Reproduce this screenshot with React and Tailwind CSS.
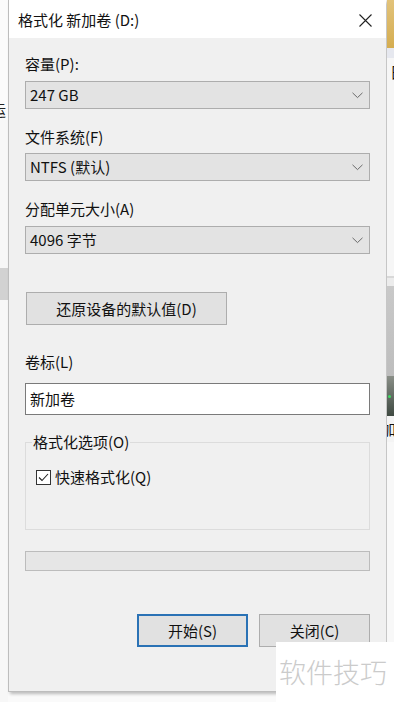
import React from "react";

const FONT = { fontFamily: '"Noto Sans CJK SC", "Noto Sans", sans-serif' };

function Chevron() {
  return (
    <svg width="11" height="7" viewBox="0 0 11 7" className="shrink-0">
      <path d="M0.5 0.8 L5.5 5.6 L10.5 0.8" fill="none" stroke="#6a6a6a" strokeWidth="1" />
    </svg>
  );
}

function Combo({ text }) {
  return (
    <div className="h-[28px] w-full border border-[#adadad] bg-[#e3e3e3] flex items-center justify-between pl-[4px] pr-[6px]">
      <span className="text-[15px] leading-[20px] text-[#111]">{text}</span>
      <Chevron />
    </div>
  );
}

function Label({ children, className = "" }) {
  return <div className={"text-[15px] leading-[20px] text-[#111] " + className}>{children}</div>;
}

export default function App() {
  return (
    <div className="relative w-[394px] h-[702px] overflow-hidden flex bg-[#fafafa]" style={FONT}>
      {/* left background strip */}
      <div className="w-[8px] h-full flex flex-col shrink-0 overflow-hidden">
        <div className="h-[100px] bg-[#fbfbfb]" />
        <div className="h-[20px] bg-[#fbfbfb] overflow-hidden flex items-center">
          <span className="text-[15px] leading-[20px] text-[#222] ml-[-9px] whitespace-nowrap">运</span>
        </div>
        <div className="h-[148px] bg-[#f7f7f7]" />
        <div className="h-[32px] bg-[#d2d2d2]" />
        <div className="flex-1 bg-[#f7f7f7]" />
      </div>

      {/* dialog */}
      <div className="w-[378px] h-[692px] shrink-0 flex flex-col bg-[#f0f0f0] border-l border-b border-[#bdbdbd] shadow-[2px_2px_3px_rgba(0,0,0,0.25)]">
        <div className="h-[38px] bg-white flex items-center justify-between pl-[9px] pr-[14px] shrink-0">
          <span className="text-[15px] leading-[20px] text-[#111] mt-[2px]">格式化 新加卷 (D:)</span>
          <svg width="13" height="13" viewBox="0 0 13 13" className="mt-[2px]">
            <path d="M0.5 0.5 L12.5 12.5 M12.5 0.5 L0.5 12.5" stroke="#222" strokeWidth="1.1" />
          </svg>
        </div>

        <div className="flex flex-col pl-[16px] pr-[16px]">
          <Label className="mt-[16px]">容量(P):</Label>
          <div className="mt-[7px]"><Combo text="247 GB" /></div>

          <Label className="mt-[18px]">文件系统(F)</Label>
          <div className="mt-[6px]"><Combo text="NTFS (默认)" /></div>

          <Label className="mt-[18px]">分配单元大小(A)</Label>
          <div className="mt-[7px]"><Combo text="4096 字节" /></div>

          <div className="mt-[38px] ml-[1px] w-[201px] h-[33px] border border-[#adadad] bg-[#e1e1e1] flex items-center justify-center">
            <span className="text-[15px] leading-[20px] text-[#111]">还原设备的默认值(D)</span>
          </div>

          <Label className="mt-[27px]">卷标(L)</Label>
          <div className="mt-[11px] h-[32px] w-full border border-[#7a7a7a] bg-white flex items-center pl-[4px]">
            <span className="text-[15px] leading-[20px] text-[#111]">新加卷</span>
          </div>

          <fieldset className="mt-[17px] h-[98px] w-full border border-[#dcdcdc] pl-[10px]">
            <legend className="ml-[-4px] px-[1px] text-[15px] leading-[20px] text-[#111]">格式化选项(O)</legend>
            <div className="mt-[15px] flex items-center">
              <div className="w-[15px] h-[15px] border border-[#333] bg-white flex items-center justify-center">
                <svg width="11" height="9" viewBox="0 0 11 9">
                  <path d="M1 4.5 L4 7.5 L10 1" fill="none" stroke="#222" strokeWidth="1.1" />
                </svg>
              </div>
              <span className="ml-[4px] text-[15px] leading-[20px] text-[#111]">快速格式化(Q)</span>
            </div>
          </fieldset>

          <div className="mt-[21px] h-[20px] w-full border border-[#bcbcbc] bg-[#e6e6e6]" />

          <div className="mt-[43px] flex justify-end gap-[11px]">
            <div className="w-[111px] h-[33px] border-2 border-[#2a72b5] bg-[#e1e1e1] flex items-center justify-center">
              <span className="text-[15px] leading-[20px] text-[#111]">开始(S)</span>
            </div>
            <div className="w-[111px] h-[33px] border border-[#adadad] bg-[#e1e1e1] flex items-center justify-center">
              <span className="text-[15px] leading-[20px] text-[#111]">关闭(C)</span>
            </div>
          </div>
        </div>
      </div>

      {/* right background strip */}
      <div className="flex-1 h-full flex flex-col overflow-hidden ml-[1px]">
        <div className="h-[48px] bg-gradient-to-b from-[#e2c37a] to-[#d5ad50]" />
        <div className="h-[10px] bg-[#e6e8ef]" />
        <div className="h-[28px] bg-[#f6f6f6] overflow-hidden flex items-center">
          <span className="text-[15px] leading-[20px] text-[#111] ml-[3px] whitespace-nowrap">日</span>
        </div>
        <div className="h-[190px] bg-[#f6f6f6]" />
        <div className="h-[2px] bg-[#d8d8d8]" />
        <div className="h-[8px] bg-[#ececec]" />
        <div className="h-[90px] bg-gradient-to-b from-[#c9c9c9] to-[#bdbdbd]" />
        <div className="h-[40px] bg-gradient-to-b from-[#8a8f88] to-[#3f4a42] flex items-center">
          <div className="w-[3px] h-[3px] rounded-full bg-[#3ddc62] ml-[1px]" />
        </div>
        <div className="h-[26px] bg-[#f4f4f4] overflow-hidden flex items-center">
          <span className="text-[15px] leading-[20px] text-[#111] ml-[-6px] whitespace-nowrap">加</span>
        </div>
        <div className="flex-1 bg-[#f8f8f8]" />
      </div>

      {/* watermark */}
      <div className="absolute left-[276px] top-[642px] w-[118px] h-[60px] bg-white flex items-center pl-[3px]">
        <span className="text-[27px] leading-[30px] font-light text-[#cbcbcb]">软件技巧</span>
      </div>
    </div>
  );
}
